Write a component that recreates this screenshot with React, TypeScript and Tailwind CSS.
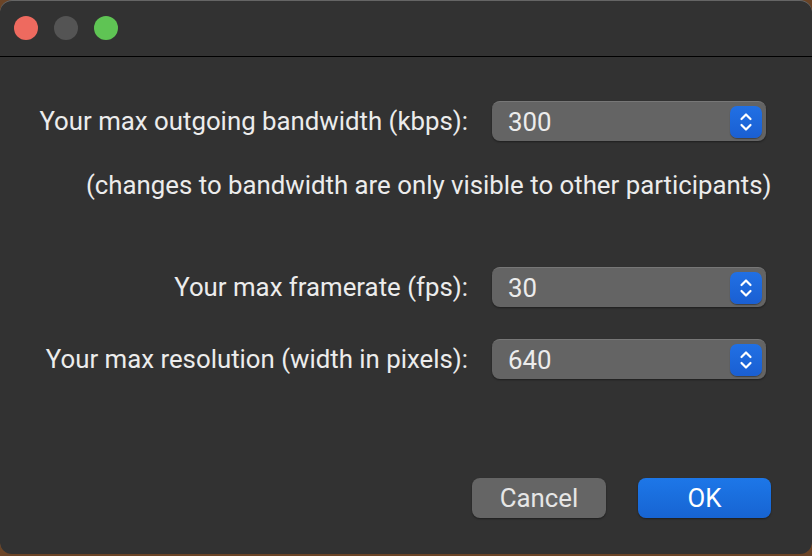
import React from "react";

function Stepper() {
  return (
    <div className="flex h-8 w-8 items-center justify-center rounded-[7px] bg-gradient-to-b from-[#2170e4] to-[#1a5fd2] shadow-[0_1px_1px_rgba(0,0,0,0.35)]">
      <svg width="14" height="22" viewBox="0 0 14 22" fill="none" stroke="white" strokeWidth="2.2" strokeLinecap="round" strokeLinejoin="round">
        <path d="M2.5 8 L7 3.5 L11.5 8" />
        <path d="M2.5 14 L7 18.5 L11.5 14" />
      </svg>
    </div>
  );
}

function Popup({ value }: { value: string }) {
  return (
    <div className="flex h-10 w-[274px] items-center justify-between rounded-[8px] border-t border-[#777] bg-[#646464] pl-4 pr-1 shadow-[0_1px_2px_rgba(0,0,0,0.4)]">
      <span className="text-[#ececec]">{value}</span>
      <Stepper />
    </div>
  );
}

function Row({ label, value }: { label: string; value: string }) {
  return (
    <div className="grid h-10 grid-cols-[468px_274px] items-center gap-6">
      <span className="text-right text-[#ececec]">{label}</span>
      <Popup value={value} />
    </div>
  );
}

export default function App() {
  return (
    <div className="h-[556px] w-[812px] bg-[#6b4426]" style={{ fontFamily: "Roboto, 'Noto Sans', sans-serif" }}>
      <div className="flex h-[554px] w-full flex-col overflow-hidden rounded-[12px] bg-[#323232] text-[25.8px] leading-[32px] shadow-[inset_0_1px_0_rgba(255,255,255,0.25)]">
        {/* title bar */}
        <div className="flex h-[57px] shrink-0 items-center gap-4 border-b border-black px-[14px]">
          <span className="h-6 w-6 rounded-full bg-[#ee6a5f]" />
          <span className="h-6 w-6 rounded-full bg-[#545454]" />
          <span className="h-6 w-6 rounded-full bg-[#5fc454]" />
        </div>

        <div className="flex flex-1 flex-col pt-[44px]">
          <Row label="Your max outgoing bandwidth (kbps):" value="300" />
          <p className="mt-[28px] pl-[86px] text-[#ececec]">
            (changes to bandwidth are only visible to other participants)
          </p>
          <div className="mt-[66px] flex flex-col gap-8">
            <Row label="Your max framerate (fps):" value="30" />
            <Row label="Your max resolution (width in pixels):" value="640" />
          </div>
          <div className="mt-auto mb-[36px] flex justify-end gap-8 pr-[41px]">
            <button className="h-10 w-[134px] rounded-[8px] bg-[#656565] text-[#e6e6e6] shadow-[0_1px_2px_rgba(0,0,0,0.4)]">
              Cancel
            </button>
            <button className="h-10 w-[133px] rounded-[8px] bg-gradient-to-b from-[#1d77e8] to-[#1764d2] text-white shadow-[0_1px_2px_rgba(0,0,0,0.4)]">
              OK
            </button>
          </div>
        </div>
      </div>
    </div>
  );
}
